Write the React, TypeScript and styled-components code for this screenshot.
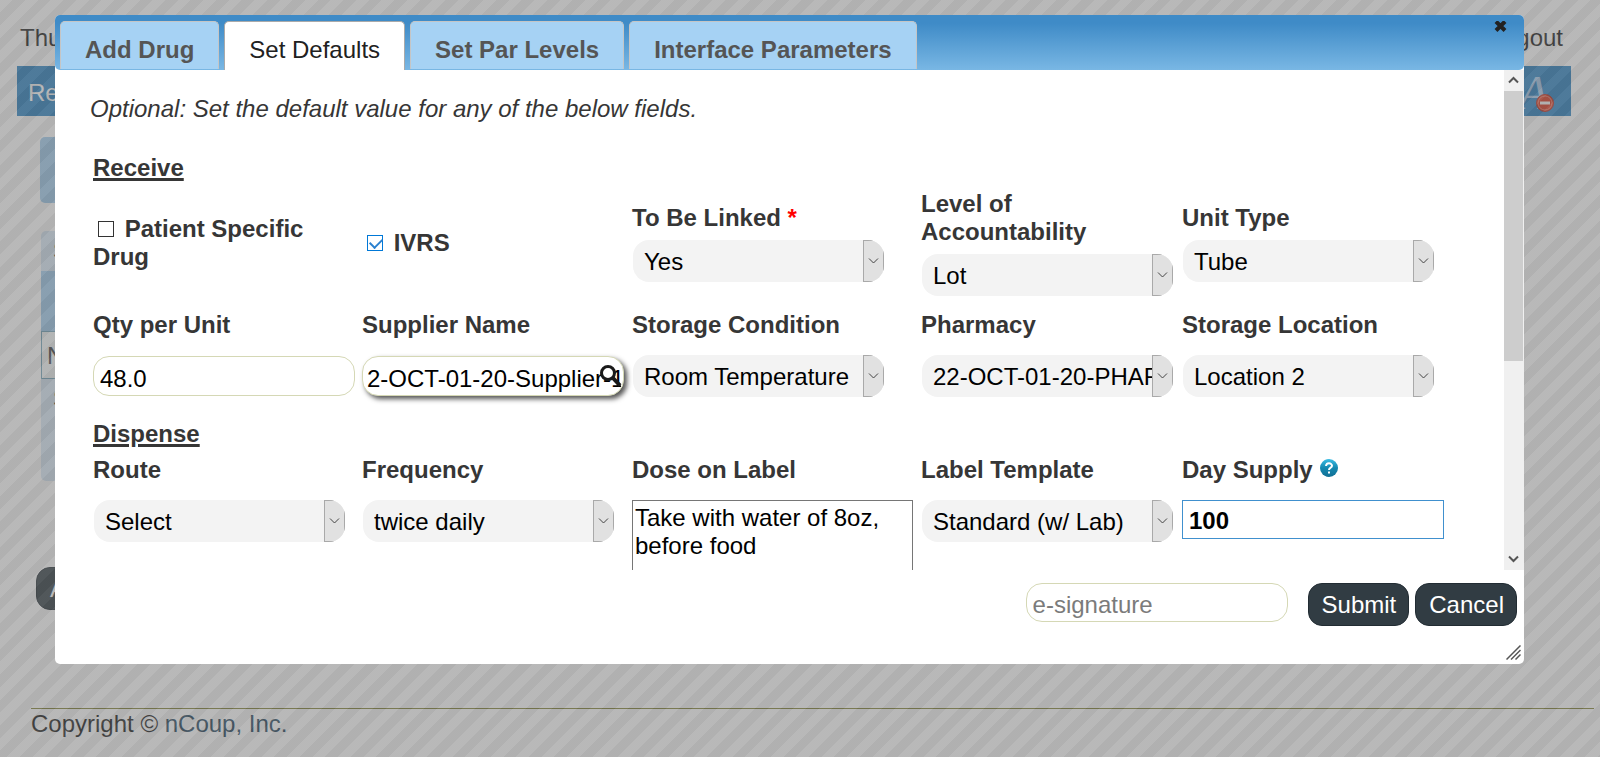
import React, { useState } from "react";
import styled, { createGlobalStyle, css } from "styled-components";

const GlobalStyle = createGlobalStyle`
  * { box-sizing: border-box; }
  body {
    margin: 0;
    background: #fff;
    color: #363636;
    font-family: "Liberation Sans", Arial, sans-serif;
    font-size: 24px;
    line-height: 28px;
    overflow: hidden;
  }
  button, input, select, textarea { font: inherit; margin: 0; }
`;

/* ---------- page behind the dialog ---------- */

const Page = styled.div`
  min-height: 100vh;
  color: #1c1c1c;
`;

const TopBar = styled.header`
  display: flex;
  justify-content: space-between;
  height: 66px;
  padding: 24px 37px 0 20px;
`;

const TopLink = styled.a`
  color: #1c1c1c;
  text-decoration: none;
`;

const NavBar = styled.nav`
  display: flex;
  align-items: center;
  justify-content: space-between;
  height: 50px;
  margin: 0 29px 0 17px;
  padding: 4px 10px 0 11px;
  background: #2a82c3;
`;

const NavLink = styled.a`
  color: #fff;
  text-decoration: none;
`;

const FontSizeButton = styled.button`
  position: relative;
  width: 42px;
  height: 46px;
  padding: 0;
  border: 0;
  background: none;
  color: #a9cbec;
  font: italic 48px/46px "Liberation Serif", serif;
  text-align: left;
`;

const MinusBadge = styled.svg`
  position: absolute;
  right: 7px;
  bottom: 4px;
`;

const Content = styled.main`
  padding: 21px 100px 0 36px;
`;

const SearchPanel = styled.section`
  height: 66px;
  margin: 0 4px 28px;
  border-radius: 5px;
  background: #a1cdef;
`;

const ListPanel = styled.section`
  height: 250px;
  margin: 0 5px 86px;
  border-radius: 5px;
  background: #d9e9f7;
`;

const ListCaption = styled.div`
  height: 40px;
  padding: 6px 12px;
`;

const ListHead = styled.div`
  height: 60px;
  border-top: 1px solid #a1cdef;
  background: #a1cdef;
`;

const ListRow = styled.div`
  height: 48px;
  padding: 10px 5px;
  border: 1px solid #73a5bb;
  background: #f4f8f8;
  color: #444;
`;

const PillButton = styled.button`
  height: 43px;
  padding: 0 12px 0 13px;
  border: 1px solid #222c33;
  border-radius: 14px;
  background: #313c43;
  color: #fff;
`;

const Footer = styled.footer`
  margin: 98px 6px 0 31px;
  padding-top: 1px;
  border-top: 1px solid #818132;
`;

const FooterLink = styled.a`
  color: #24455c;
  text-decoration: none;
`;

const Overlay = styled.div`
  position: fixed;
  inset: 0;
  opacity: 0.5;
  background: repeating-linear-gradient(135deg, #737373 0 9px, #636363 9px 18px);
`;

/* ---------- dialog ---------- */

const Dialog = styled.section`
  position: absolute;
  top: 15px;
  left: 55px;
  right: 76px;
  border-radius: 5px;
  background: #fff;
`;

const TitleBar = styled.header`
  display: flex;
  justify-content: space-between;
  align-items: flex-start;
  height: 55px;
  padding: 6px 17px 0 5px;
  border-radius: 5px;
  background: linear-gradient(#3f8bc7 15%, #79b7e4);
`;

const Tabs = styled.div`
  display: flex;
  gap: 5px;
`;

const Tab = styled.button<{ $active?: boolean }>`
  height: 48px;
  padding: 8px 24px 0;
  border: 1px solid #c5c5c5;
  border-bottom: 0;
  border-radius: 5px 5px 0 0;
  background: #a6d2f4;
  color: #555;
  font-weight: bold;
  white-space: nowrap;
  ${(p) =>
    p.$active &&
    css`
      height: 49px;
      border-color: #aaa;
      background: #fff;
      color: #212121;
      font-weight: normal;
    `}
`;

const CloseButton = styled.button`
  display: flex;
  padding: 0;
  border: 0;
  background: none;
`;

const Scroller = styled.div`
  display: flex;
  height: 500px;
`;

const Body = styled.div`
  flex: 1;
  min-width: 0;
  overflow: hidden;
  padding: 25px 0 0 35px;
`;

const Intro = styled.p`
  margin: 0 0 31px;
  font-style: italic;
`;

const Form = styled.form`
  padding-left: 3px;
`;

const SectionTitle = styled.h2`
  margin: 0 0 8px;
  font-size: 24px;
  line-height: 28px;
  text-decoration: underline;
  text-decoration-thickness: 3px;
  text-underline-offset: 2px;
`;

const Row = styled.div<{ $centered?: boolean; $after?: number }>`
  display: grid;
  grid-template-columns: 269fr 270fr 289fr 261fr 322fr;
  align-items: ${(p) => (p.$centered ? "center" : "start")};
  margin-bottom: ${(p) => p.$after ?? 0}px;
`;

const Field = styled.div<{ $tight?: boolean }>`
  display: flex;
  flex-direction: column;
  align-items: flex-start;
  gap: ${(p) => (p.$tight ? 8 : 16)}px;
  min-width: 0;
`;

const Label = styled.label`
  font-weight: bold;
`;

const Required = styled.span`
  color: #f00;
`;

const CheckBox = styled.input`
  appearance: none;
  display: inline-block;
  position: relative;
  width: 16px;
  height: 16px;
  margin: 0 4px 0 5px;
  border: 1px solid #333;
  background: #fff;
  vertical-align: baseline;

  &:checked { border-color: #0078d7; }
  &:checked::after {
    content: "";
    position: absolute;
    left: 2px;
    top: 2px;
    width: 10px;
    height: 6px;
    border: solid #2a80cf;
    border-width: 0 0 2px 2px;
    transform: rotate(-45deg);
  }
`;

const SelectFrame = styled.span`
  position: relative;
  display: flex;
  width: 251px;
  height: 42px;
  margin-left: 1px;
  border-radius: 16px;
  overflow: hidden;
`;

const SelectInput = styled.select`
  appearance: none;
  width: 100%;
  padding: 2px 21px 0 11px;
  border: 0;
  border-radius: 0;
  background: #f3f3f3;
  color: #000;
`;

const SelectArrow = styled.span`
  position: absolute;
  top: 0;
  right: 0;
  bottom: 0;
  display: flex;
  align-items: center;
  justify-content: center;
  width: 21px;
  border: 1px solid #a9a9a9;
  background: #e1e1e1;
  pointer-events: none;
`;

const TextInput = styled.input<{ $raised?: boolean; $active?: boolean }>`
  width: 262px;
  height: 40px;
  margin-top: 1px;
  padding: 5px 6px 0;
  border: 1px solid #d5d8b5;
  border-radius: 16px;
  background: #fff;
  color: #000;
  outline: 0;
  &::placeholder { color: #7b7b7b; opacity: 1; }
  ${(p) =>
    p.$raised &&
    css`
      padding: 5px 2px 0 4px;
      box-shadow: 3px 3px 5px #555;
    `}
  ${(p) =>
    p.$active &&
    css`
      height: 39px;
      margin-top: 0;
      border-color: #4090ce;
      border-radius: 0;
      padding-top: 3px;
      font-weight: bold;
    `}
`;

const Lookup = styled.span`
  position: relative;
  display: flex;
`;

const LookupIcon = styled.svg`
  position: absolute;
  right: 2px;
  top: 10px;
`;

const TextArea = styled.textarea`
  width: 281px;
  height: 120px;
  padding: 3px 2px;
  border: 1px solid #767676;
  border-radius: 0;
  background: #fff;
  color: #000;
  resize: none;
`;

const HelpIcon = styled.svg`
  margin-left: 1px;
  vertical-align: 1px;
`;

const ScrollBar = styled.div`
  display: flex;
  flex-direction: column;
  width: 20px;
  background: #f0f0f0;
`;

const ScrollButton = styled.button`
  display: flex;
  align-items: center;
  justify-content: center;
  height: 21px;
  padding: 0 1px 1px 0;
  border: 0;
  background: none;
`;

const ScrollTrack = styled.div`
  flex: 1;
  padding-right: 1px;
`;

const ScrollThumb = styled.div`
  height: 59%;
  background: #cdcdcd;
`;

const Actions = styled.footer`
  display: flex;
  justify-content: flex-end;
  gap: 6px;
  padding: 13px 7px 19px;
`;

const Signature = styled(TextInput)`
  height: 39px;
  margin: 0 14px 0 0;
  padding-top: 4px;
`;

const GripRow = styled.div`
  display: flex;
  justify-content: flex-end;
  height: 19px;
  padding-right: 3px;
`;

function Chevron({ up, width = 1, color = "#444" }: { up?: boolean; width?: number; color?: string }) {
  return (
    <svg width="11" height="8" viewBox="0 0 11 8" fill="none" stroke={color} strokeWidth={width} aria-hidden="true">
      <path d={up ? "M1 6.5 5.5 2 10 6.5" : "M1 1.5 5.5 6 10 1.5"} />
    </svg>
  );
}

function SelectField({ id, label, value, tight, required }: { id: string; label: string; value: string; tight?: boolean; required?: boolean }) {
  return (
    <Field $tight={tight}>
      <Label htmlFor={id}>
        {label}
        {required && <Required> *</Required>}
      </Label>
      <SelectFrame>
        <SelectInput id={id} defaultValue={value}>
          <option>{value}</option>
        </SelectInput>
        <SelectArrow>
          <Chevron />
        </SelectArrow>
      </SelectFrame>
    </Field>
  );
}

const TABS = ["Add Drug", "Set Defaults", "Set Par Levels", "Interface Parameters"];

export default function App() {
  const [tab, setTab] = useState("Set Defaults");
  return (
    <>
      <GlobalStyle />
      <Page>
        <TopBar>
          <span>Thu</span>
          <TopLink href="#logout">Logout</TopLink>
        </TopBar>
        <NavBar>
          <NavLink href="#receive">Re</NavLink>
          <FontSizeButton aria-label="Decrease font size">
            A
            <MinusBadge width="18" height="18" viewBox="0 0 18 18">
              <circle cx="9" cy="9" r="8.5" fill="#e03a22" stroke="#b5281a" />
              <circle cx="9" cy="9" r="7" fill="none" stroke="#f0806c" />
              <rect x="4" y="7.5" width="10" height="3" fill="#fff" />
            </MinusBadge>
          </FontSizeButton>
        </NavBar>
        <Content>
          <SearchPanel />
          <ListPanel>
            <ListCaption>S</ListCaption>
            <ListHead />
            <ListRow>N</ListRow>
            <ListCaption>S</ListCaption>
          </ListPanel>
          <PillButton>Add</PillButton>
        </Content>
        <Footer>
          Copyright © <FooterLink href="#ncoup">nCoup, Inc.</FooterLink>
        </Footer>
      </Page>
      <Overlay />

      <Dialog role="dialog" aria-label="Set Defaults">
        <TitleBar>
          <Tabs role="tablist">
            {TABS.map((name) => (
              <Tab key={name} role="tab" aria-selected={name === tab} $active={name === tab} onClick={() => setTab(name)}>
                {name}
              </Tab>
            ))}
          </Tabs>
          <CloseButton aria-label="Close">
            <svg width="13" height="11" viewBox="0 0 13 11" stroke="#222" strokeWidth="4">
              <path d="M2 0.5 11 9.5M11 0.5 2 9.5" />
            </svg>
          </CloseButton>
        </TitleBar>

        <Scroller>
          <Body>
            <Intro>Optional: Set the default value for any of the below fields.</Intro>
            <Form>
              <SectionTitle>Receive</SectionTitle>
              <Row $centered $after={15}>
                <Label>
                  <CheckBox type="checkbox" /> Patient Specific Drug
                </Label>
                <Label>
                  <CheckBox type="checkbox" defaultChecked /> IVRS
                </Label>
                <SelectField id="linked" label="To Be Linked" value="Yes" tight required />
                <SelectField id="level" label="Level of Accountability" value="Lot" tight />
                <SelectField id="unit" label="Unit Type" value="Tube" tight />
              </Row>
              <Row $after={23}>
                <Field>
                  <Label htmlFor="qty">Qty per Unit</Label>
                  <TextInput id="qty" defaultValue="48.0" />
                </Field>
                <Field>
                  <Label htmlFor="supplier">Supplier Name</Label>
                  <Lookup>
                    <TextInput id="supplier" $raised defaultValue="2-OCT-01-20-Supplier-1" />
                    <LookupIcon width="22" height="24" viewBox="0 0 22 24" fill="none" stroke="#1a1a1a">
                      <circle cx="8" cy="8" r="6.5" strokeWidth="3" />
                      <path d="M12.5 12.5 20 20.5" strokeWidth="4" />
                    </LookupIcon>
                  </Lookup>
                </Field>
                <SelectField id="condition" label="Storage Condition" value="Room Temperature" />
                <SelectField id="pharmacy" label="Pharmacy" value="22-OCT-01-20-PHARMACY" />
                <SelectField id="location" label="Storage Location" value="Location 2" />
              </Row>
              <SectionTitle>Dispense</SectionTitle>
              <Row>
                <SelectField id="route" label="Route" value="Select" />
                <SelectField id="frequency" label="Frequency" value="twice daily" />
                <Field>
                  <Label htmlFor="dose">Dose on Label</Label>
                  <TextArea id="dose" defaultValue="Take with water of 8oz, before food" />
                </Field>
                <SelectField id="template" label="Label Template" value="Standard (w/ Lab)" />
                <Field>
                  <Label htmlFor="supply">
                    Day Supply{" "}
                    <HelpIcon width="18" height="18" viewBox="0 0 18 18" aria-hidden="true">
                      <defs>
                        <linearGradient id="help" x2="0" y2="1">
                          <stop offset="0" stopColor="#3cbde4" />
                          <stop offset="0.5" stopColor="#1488b0" />
                          <stop offset="1" stopColor="#116f94" />
                        </linearGradient>
                      </defs>
                      <circle cx="9" cy="9" r="9" fill="url(#help)" />
                      <path d="M6 7C6 3.500 12 3.500 12 6.800 12 8.800 9 8.500 9 11M9 12.500V14.500" fill="none" stroke="#fff" strokeWidth="2" />
                    </HelpIcon>
                  </Label>
                  <TextInput id="supply" $active defaultValue="100" />
                </Field>
              </Row>
            </Form>
          </Body>
          <ScrollBar aria-hidden="true">
            <ScrollButton tabIndex={-1}>
              <Chevron up width={2} color="#555" />
            </ScrollButton>
            <ScrollTrack>
              <ScrollThumb />
            </ScrollTrack>
            <ScrollButton tabIndex={-1}>
              <Chevron width={2} color="#555" />
            </ScrollButton>
          </ScrollBar>
        </Scroller>

        <Actions>
          <Signature placeholder="e-signature" aria-label="e-signature" />
          <PillButton>Submit</PillButton>
          <PillButton>Cancel</PillButton>
        </Actions>
        <GripRow>
          <svg width="15" height="15" viewBox="0 0 15 15" stroke="#555" strokeWidth="1.500" aria-hidden="true">
            <path d="M0.500 14.500 14.500 0.500M5 14.500 14.500 5M9.500 14.500 14.500 9.500" />
          </svg>
        </GripRow>
      </Dialog>
    </>
  );
}
